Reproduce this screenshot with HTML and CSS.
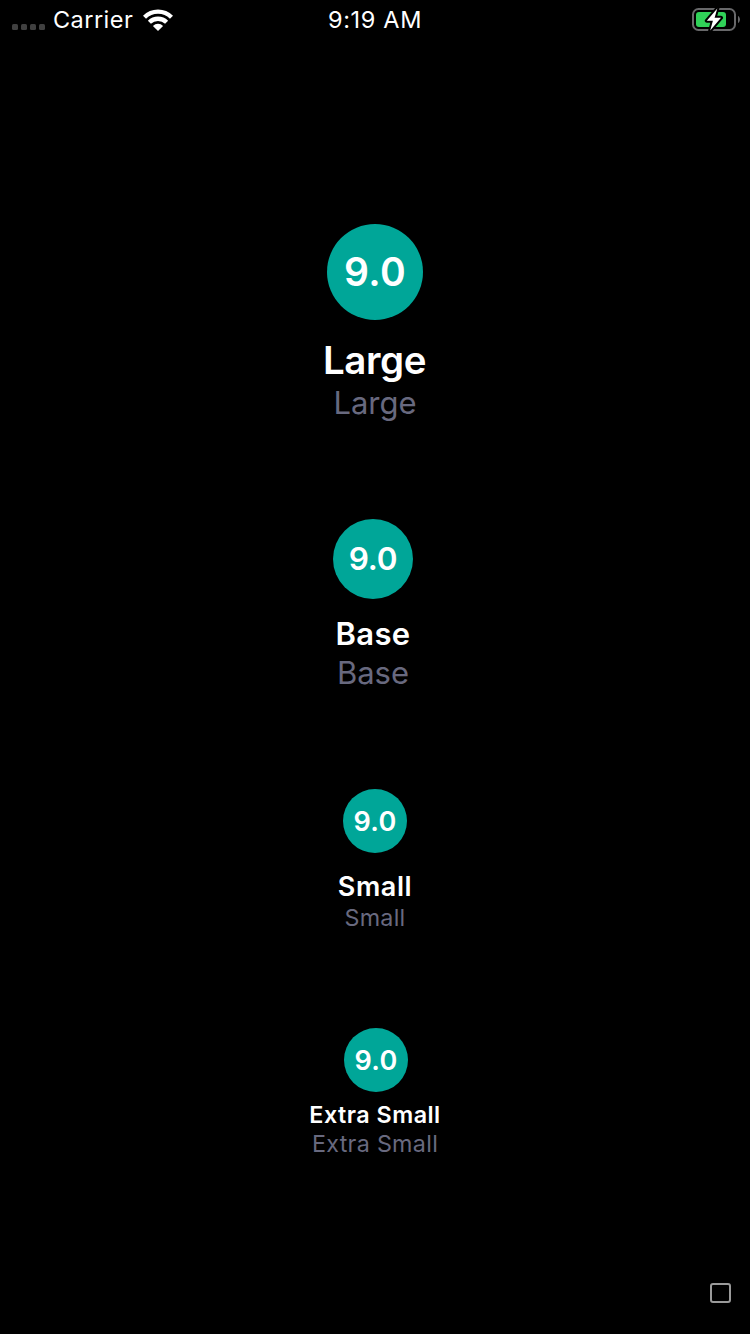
FILE: index.html
```html
<!DOCTYPE html>
<html lang="en">
<head>
<meta charset="utf-8">
<title>Ratings</title>
<link rel="stylesheet" href="styles.css">
</head>
<body>
<header class="status-bar">
  <div class="network">
    <div class="signal"><i></i><i></i><i></i><i></i></div>
    <span class="carrier">Carrier</span>
    <svg class="wifi" width="30" height="22" viewBox="0 0 30 22">
      <g fill="none" stroke="#fff" stroke-width="4.300">
        <path d="M1.500 8.300A19 19 0 0 1 28.500 8.300"/>
        <path d="M6.400 13.300A12.200 12.200 0 0 1 23.600 13.300"/>
      </g>
      <path d="M15 22L9.900 16.900A7.400 7.400 0 0 1 20.100 16.900Z" fill="#fff"/>
    </svg>
  </div>
  <span class="clock">9:19 AM</span>
  <svg class="battery" width="50" height="26" viewBox="0 0 50 26">
    <rect x="3" y="3" width="42" height="21" rx="5.5" fill="none" stroke="#68686a" stroke-width="2"/>
    <path d="M48 10C50.600 11.200 50.600 15.800 48 17Z" fill="#68686a"/>
    <rect x="6" y="6" width="30" height="15" rx="3" fill="#30d158"/>
    <path d="M27.300 2.500L16.800 14.800H22.900L20.200 24.500L31 11.800H24.600Z" fill="#fff" stroke="#000" stroke-width="4" paint-order="stroke" stroke-linejoin="round"/>
  </svg>
</header>
<main class="ratings">
  <section class="rating large">
    <div class="score"><span>9.0</span></div>
    <div class="title"><span>Large</span></div>
    <div class="subtitle"><span>Large</span></div>
  </section>
  <section class="rating base">
    <div class="score"><span>9.0</span></div>
    <div class="title"><span>Base</span></div>
    <div class="subtitle"><span>Base</span></div>
  </section>
  <section class="rating small">
    <div class="score"><span>9.0</span></div>
    <div class="title"><span>Small</span></div>
    <div class="subtitle"><span>Small</span></div>
  </section>
  <section class="rating xsmall">
    <div class="score"><span>9.0</span></div>
    <div class="title"><span>Extra Small</span></div>
    <div class="subtitle"><span>Extra Small</span></div>
  </section>
</main>
<footer class="toolbar"><div class="square"></div></footer>
</body>
</html>
```
FILE: styles.css
```css
* { box-sizing: border-box; }
body {
  margin: 0;
  width: 750px;
  height: 1334px;
  background: #000;
  color: #fff;
  font-family: Inter, "Liberation Sans", sans-serif;
  display: flex;
  flex-direction: column;
  overflow: hidden;
}
.status-bar {
  height: 40px;
  display: grid;
  grid-template-columns: 1fr auto 1fr;
  font-size: 23.5px;
  line-height: 40px;
}
.network { display: flex; padding-left: 12px; }
.signal { display: flex; gap: 3px; padding-top: 24px; width: 41px; }
.signal i { width: 6px; height: 6px; border-radius: 1.5px; background: #404040; }
.carrier { letter-spacing: 0.45px; width: 89.5px; }
.clock { letter-spacing: 0.65px; }
.wifi { margin-top: 9px; }
.battery { justify-self: end; margin: 6px 10px 0 0; }
.ratings { flex: 1; padding-top: 184px; }
.rating { display: flex; flex-direction: column; align-items: center; white-space: nowrap; }
.score {
  display: flex;
  align-items: center;
  justify-content: center;
  border-radius: 50%;
  background: #00a698;
  font-weight: 600;
}
.title { font-weight: 600; }
.subtitle { color: #68697f; }

.large .score { width: 96px; height: 96px; font-size: 39px; letter-spacing: 0.3px; padding-bottom: 1px; margin-bottom: 16px; }
.large .title { font-size: 38.5px; line-height: 48px; letter-spacing: -0.4px; padding-right: 1px; }
.large .subtitle { font-size: 31px; line-height: 38px; }

.base { margin-top: 97px; padding-right: 4px; }
.base .score { width: 80px; height: 80px; font-size: 31.5px; letter-spacing: -0.2px; padding-bottom: 1px; margin-bottom: 15px; }
.base .title { font-size: 31px; line-height: 40px; letter-spacing: 0.3px; }
.base .subtitle { font-size: 31px; line-height: 38px; }

.small { margin-top: 97px; }
.small .score { width: 64px; height: 64px; font-size: 27px; letter-spacing: 0.3px; margin-bottom: 17px; }
.small .title { font-size: 27px; line-height: 34px; letter-spacing: 0.6px; }
.small .subtitle { font-size: 23.3px; line-height: 28px; letter-spacing: 0.25px; }

.xsmall { margin-top: 96px; }
.xsmall .score { width: 64px; height: 64px; font-size: 27px; letter-spacing: 0.3px; margin: 0 0 9px 2px; }
.xsmall .title { font-size: 23.3px; line-height: 28px; letter-spacing: 0.5px; }
.xsmall .subtitle { font-size: 23.3px; line-height: 30px; letter-spacing: 0.3px; }

.toolbar { height: 52px; display: flex; justify-content: flex-end; padding: 1px 19px 0 0; }
.square { width: 21px; height: 20px; border: 2px solid #9a9a9a; border-radius: 3px; }
```
